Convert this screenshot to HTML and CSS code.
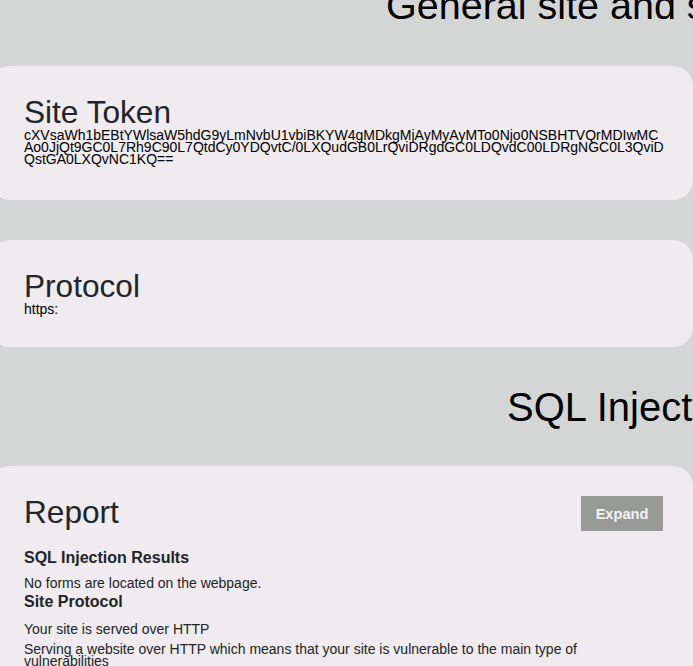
FILE: index.html
```html
<!DOCTYPE html>
<html lang="en">
<head>
<meta charset="utf-8">
<title>Site report</title>
<link rel="stylesheet" href="styles.css">
</head>
<body>
<main class="page">
  <h2 class="section-title section-title--first">General site and security</h2>

  <section class="card card--token">
    <h3 class="card-title">Site Token</h3>
    <p class="token">cXVsaWh1bEBtYWlsaW5hdG9yLmNvbU1vbiBKYW4gMDkgMjAyMyAyMTo0Njo0NSBHTVQrMDIwMCAo0JjQt9GC0L7Rh9C90L7QtdCy0YDQvtC/0LXQudGB0LrQviDRgdGC0LDQvdC00LDRgNGC0L3QviDQstGA0LXQvNC1KQ==</p>
  </section>

  <section class="card card--gap">
    <h3 class="card-title">Protocol</h3>
    <p class="token">https:</p>
  </section>

  <h2 class="section-title section-title--sql">SQL Injection</h2>

  <section class="card card--report">
    <div class="report-head">
      <h3 class="card-title">Report</h3>
      <button class="expand-btn" type="button">Expand</button>
    </div>
    <div class="result-group">
      <h4 class="result-title">SQL Injection Results</h4>
      <p class="result-text">No forms are located on the webpage.</p>
    </div>
    <div class="result-group result-group--next">
      <h4 class="result-title result-title--wide">Site Protocol</h4>
      <p class="result-text">Your site is served over HTTP</p>
      <p class="result-text">Serving a website over HTTP which means that your site is vulnerable to the main type of vulnerabilities</p>
    </div>
  </section>
</main>
</body>
</html>
```

FILE: styles.css
```css
html, body {
  margin: 0;
  padding: 0;
}

body {
  background: #d4d6d5;
  font-family: "Liberation Sans", Arial, sans-serif;
  color: #212529;
  overflow: hidden;
  height: 666px;
}

.page {
  margin-left: -10px;
  width: 703px;
  display: flex;
  flex-direction: column;
}

.section-title {
  margin: 36px 0;
  padding-left: 397px;
  font-size: 40px;
  font-weight: normal;
  line-height: 48px;
  color: #000;
  white-space: nowrap;
  overflow: hidden;
}

.section-title--first {
  margin-top: -19px;
  margin-bottom: 37px;
  padding-left: 396px;
  font-size: 39.5px;
}

.section-title--sql {
  padding-left: 517px;
  margin-bottom: 35px;
}

.card {
  background: #efebee;
  border-radius: 20px;
  padding: 29px 30px 32px 34px;
}

.card--token {
  padding-bottom: 35px;
}

.card--gap {
  margin-top: 40px;
}

.card-title {
  margin: 0;
  font-size: 31.6px;
  font-weight: normal;
  line-height: 34px;
  color: #212529;
}

.token {
  margin: 0 -3px 0 0;
  font-size: 14px;
  line-height: 12px;
  color: #000;
  word-break: break-all;
}

.report-head {
  display: flex;
  justify-content: space-between;
  align-items: flex-start;
}

.expand-btn {
  margin-top: 1px;
  width: 82px;
  height: 35px;
  border: 0;
  background: #979a96;
  color: #f4f2f4;
  font-family: "Liberation Sans", Arial, sans-serif;
  font-weight: bold;
  font-size: 14.6px;
  padding: 0;
}

.result-group {
  display: flex;
  flex-direction: column;
  gap: 8px;
  margin-top: 17px;
}

.result-group--next {
  margin-top: 3px;
}

.result-title {
  margin: 0 0 2px;
  font-size: 16px;
  font-weight: bold;
  line-height: 19px;
  color: #212529;
}

.result-title--wide {
  margin-bottom: 4px;
}

.result-text {
  margin: 0;
  font-size: 14px;
  line-height: 12px;
  color: #212529;
}
```
